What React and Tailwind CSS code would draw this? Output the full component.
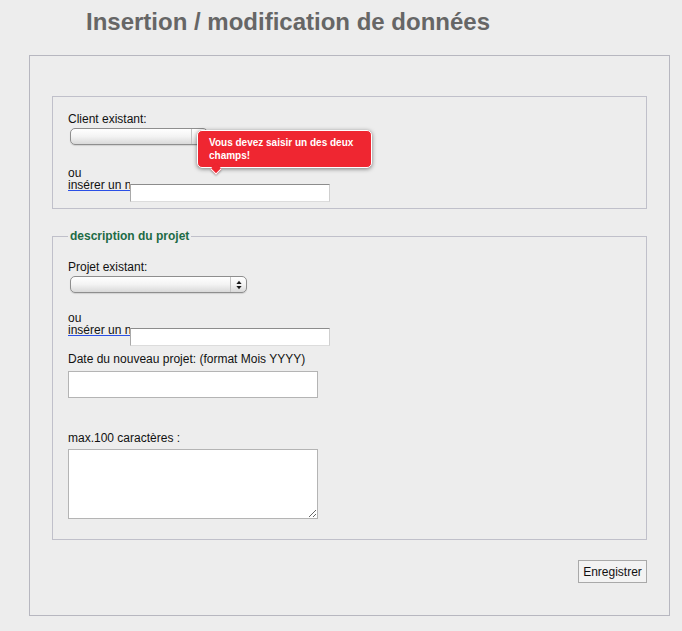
import React from "react";

function Arrows() {
  return (
    <svg width="6" height="10" viewBox="0 0 6 10" aria-hidden="true">
      <path d="M3 0.8 L5.6 4 L0.4 4 Z" fill="#1a1a1a" />
      <path d="M0.4 6 L5.6 6 L3 9.2 Z" fill="#1a1a1a" />
    </svg>
  );
}

function FakeSelect({ className }) {
  return (
    <div
      className={`flex h-[17px] rounded-[5px] border border-[#8e8e8e] bg-linear-to-b from-white via-[#f3f3f3] to-[#d9d9d9] shadow-[0_1px_1px_rgba(0,0,0,0.12)] ${className}`}
    >
      <div className="flex-1" />
      <div className="flex w-[16px] items-center justify-center border-l border-[#c4c4c4]">
        <Arrows />
      </div>
    </div>
  );
}

const textInput =
  "bg-white border border-t-[#8c8c8c] border-l-[#a9a9a9] border-r-[#cfcfcf] border-b-[#dcdcdc] outline-none";

export default function App() {
  return (
    <div className="min-h-[631px] bg-[#ededed] font-['Liberation_Sans',Arial,Helvetica,sans-serif] text-[12px] leading-[14px] text-[#111]">
      <div className="pl-[86px] pt-[8px] text-[24px] font-bold leading-[28px] text-[#666666]">
        Insertion / modification de données
      </div>

      <div className="ml-[29px] mt-[19px] w-[641px] border border-[#b7b7c0] px-[22px] pb-[32px] pt-[40px]">
        <fieldset className="border border-[#c0c0ca] px-[15px] pb-[6px] pt-[15px]">
          <div>Client existant:</div>
          <div className="relative mt-[2px]">
            <FakeSelect className="ml-[2px] w-[138px]" />
            <div className="absolute left-[129px] top-[2px] w-[175px] rounded-[5px] border border-white bg-[#ef2631] px-[11px] pb-[5px] pt-[5px] text-[10px] font-bold leading-[13px] text-white shadow-[0_1px_4px_rgba(0,0,0,0.5)]">
              Vous devez saisir un des deux champs!
              <div className="absolute -bottom-[6px] left-[14px] h-[8px] w-[8px] rotate-45 border-b border-r border-white bg-[#ef2631] shadow-[1px_1px_2px_rgba(0,0,0,0.3)]" />
            </div>
          </div>
          <div className="mt-[21px]">ou</div>
          <div className="-mt-[2px] flex items-start">
            <span className="w-[62px] overflow-hidden whitespace-nowrap underline decoration-[#2a4fe6]">
              insérer un nouveau client:
            </span>
            <input type="text" className={`mt-[6px] h-[18px] w-[200px] ${textInput}`} />
          </div>
        </fieldset>

        <fieldset className="mt-[20px] border border-[#c0c0ca] px-[15px] pb-[20px] pt-[17px]">
          <legend className="px-[2px] font-bold text-[#1d6b45]">description du projet</legend>
          <div>Projet existant:</div>
          <FakeSelect className="ml-[2px] mt-[2px] w-[177px]" />
          <div className="mt-[18px]">ou</div>
          <div className="-mt-[2px] flex items-start">
            <span className="w-[62px] overflow-hidden whitespace-nowrap underline decoration-[#2a4fe6]">
              insérer un nouveau projet:
            </span>
            <input type="text" className={`mt-[5px] h-[18px] w-[200px] ${textInput}`} />
          </div>
          <div className="mt-[6px]">Date du nouveau projet: (format Mois YYYY)</div>
          <input
            type="text"
            className="mt-[5px] block h-[27px] w-[250px] border border-[#b4b4b4] bg-white outline-none"
          />
          <div className="mt-[33px]">max.100 caractères :</div>
          <textarea className="mt-[4px] block h-[70px] w-[250px] border border-[#b4b4b4] bg-white outline-none" />
        </fieldset>

        <div className="mt-[20px] flex justify-end">
          <button
            type="button"
            className="h-[23px] w-[69px] border border-[#a9a9a9] bg-[#f3f3f3] text-[12px] leading-[14px] text-[#111]"
          >
            Enregistrer
          </button>
        </div>
      </div>
    </div>
  );
}
